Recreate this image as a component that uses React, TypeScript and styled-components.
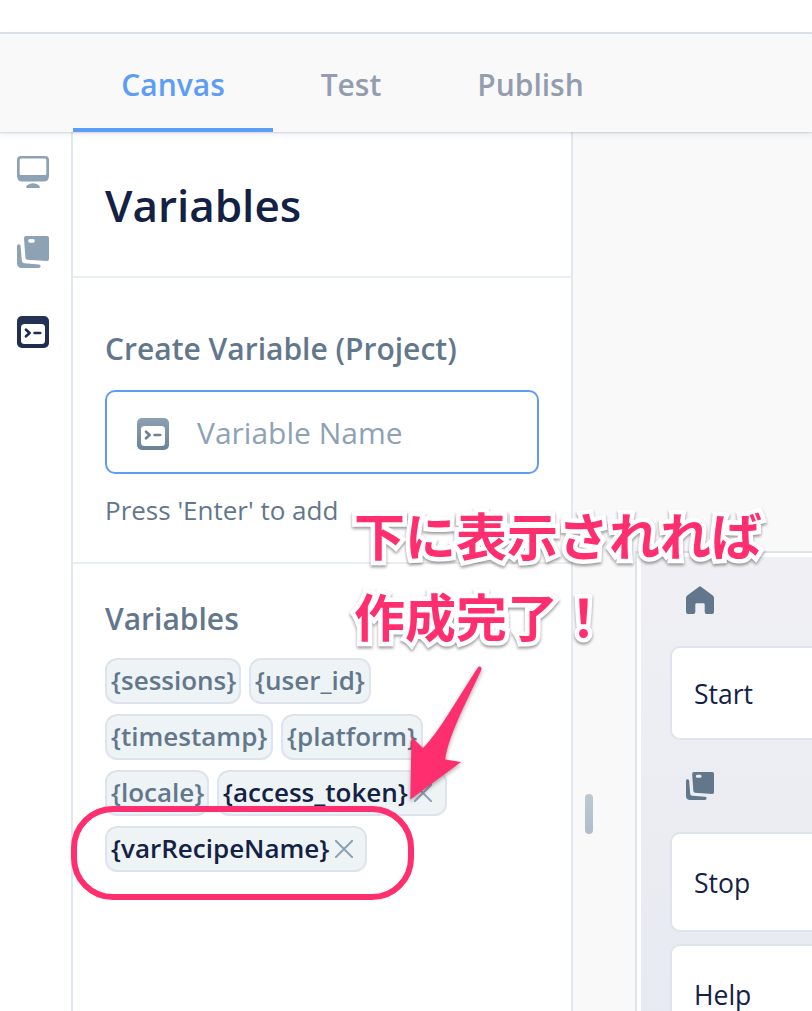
import React from "react";
import styled, { createGlobalStyle } from "styled-components";

const GlobalStyle = createGlobalStyle`
  * { box-sizing: border-box; }
  html, body { margin: 0; background: #fff; overflow: hidden; }
  body { font-family: "Open Sans", sans-serif; color: #132144; }
`;

const Page = styled.div`
  position: relative;
  width: 812px;
  height: 1011px;
  overflow: hidden;
  display: flex;
  flex-direction: column;
`;

const TopBar = styled.div`
  flex: none;
  height: 34px;
  background: #fff;
  border-bottom: 2px solid #dfe3ed;
`;

const Tabs = styled.nav`
  position: relative;
  z-index: 1;
  flex: none;
  height: 98px;
  padding-left: 73px;
  display: flex;
  background: #f9f9f9;
  box-shadow: 0 1px 1px rgba(17, 49, 96, 0.1), 0 2px 6px rgba(17, 49, 96, 0.1);
`;

const Tab = styled.div<{ $active?: boolean; $width: number }>`
  width: ${(p) => p.$width}px;
  padding-top: 8px;
  border-bottom: 4px solid ${(p) => (p.$active ? "#5d9df5" : "transparent")};
  display: flex;
  align-items: center;
  justify-content: center;
  font-size: 30px;
  line-height: 40px;
  font-weight: 600;
  color: ${(p) => (p.$active ? "#5d9df5" : "#949db0")};
`;

const Body = styled.div`
  flex: 1;
  min-height: 0;
  display: flex;
`;

const Rail = styled.div`
  flex: none;
  width: 73px;
  padding: 24px 0 0 17px;
  border-right: 2px solid #e2e8ee;
  display: flex;
  flex-direction: column;
  gap: 48px;
  svg { display: block; }
`;

const Panel = styled.section`
  flex: none;
  width: 500px;
  border-right: 2px solid #e2e8ee;
`;

const PanelHeader = styled.header`
  height: 146px;
  padding: 43px 32px 0;
  border-bottom: 2px solid #eaeff4;
  font-size: 44px;
  line-height: 60px;
  font-weight: 600;
`;

const CreateSection = styled.div`
  height: 286px;
  padding: 50px 32px 0;
  border-bottom: 2px solid #eaeff4;
`;

const Label = styled.div`
  font-size: 30px;
  line-height: 42px;
  font-weight: 600;
  color: #62778c;
  white-space: nowrap;
`;

const Field = styled.div`
  margin: 20px 0 14px;
  height: 84px;
  padding: 4px 30px 0;
  border: 2px solid #5d9df5;
  border-radius: 10px;
  display: flex;
  align-items: center;
  gap: 28px;
  font-size: 30px;
  line-height: 40px;
  color: #8da2b5;
`;

const Placeholder = styled.span`
  padding-bottom: 2px;
`;

const Hint = styled.div`
  font-size: 26px;
  line-height: 44px;
  color: #62778c;
`;

const ListSection = styled.div`
  padding: 34px 32px 0;
`;

const Chips = styled.div`
  margin-top: 18px;
  padding-right: 32px;
  display: flex;
  flex-wrap: wrap;
  gap: 10px 8px;
`;

const Chip = styled.div<{ $own?: boolean; $width: number }>`
  width: ${(p) => p.$width}px;
  height: 46px;
  padding-left: 4px;
  border: 2px solid #dfe3ed;
  border-radius: 12px;
  background: #eef3f5;
  display: flex;
  align-items: center;
  gap: 6px;
  font-size: 26px;
  line-height: 36px;
  font-weight: 600;
  white-space: nowrap;
  color: ${(p) => (p.$own ? "#132144" : "#62778c")};
  svg { flex: none; }
`;

const ChipName = styled.span`
  padding-bottom: 2px;
`;

const Canvas = styled.main`
  flex: 1;
  min-width: 0;
  display: flex;
  background: #f9f9f9;
`;

const Gutter = styled.div`
  flex: none;
  width: 62px;
  padding: 662px 0 0 12px;
`;

const Grip = styled.div`
  width: 8px;
  height: 40px;
  border-radius: 4px;
  background: linear-gradient(#bdc9d2, #b0bdc8);
`;

const Block = styled.div`
  flex: 1;
  min-width: 0;
  margin-top: 419px;
  padding: 29px 0 0 29px;
  border: solid #dfe3ea;
  border-width: 2px 0 0 2px;
  box-shadow: inset 4px 4px 0 #fff;
  background: linear-gradient(#f0f0f4, #e7eaf1);
  overflow: hidden;
`;

const BlockIcon = styled.div<{ $top: number }>`
  margin: ${(p) => p.$top}px 0 0 20px;
  height: 28px;
  svg { display: block; }
`;

const Card = styled.div<{ $top: number; $height: number }>`
  margin: ${(p) => p.$top}px -20px 0 4px;
  height: ${(p) => p.$height}px;
  padding: 1px 0 0 22px;
  border: 2px solid #dfe3ed;
  border-radius: 10px;
  background: #fff;
  display: flex;
  align-items: center;
  font-size: 26.5px;
  line-height: 36px;
`;

const Note = styled.div`
  position: absolute;
  z-index: 3;
  left: 354px;
  top: 494px;
  font-family: "Noto Sans CJK JP", sans-serif;
  font-weight: 700;
  font-size: 51px;
  line-height: 81px;
  white-space: nowrap;
  color: #ff2e6e;
  -webkit-text-stroke: 9px #fff;
  paint-order: stroke fill;
  stroke-linejoin: round;
  filter: drop-shadow(0 2px 1.5px rgba(0, 0, 0, 0.4));
`;

const NoteLine = styled.div`
  height: 81px;
`;

const Marker = styled.div`
  position: absolute;
  z-index: 2;
  left: 71px;
  top: 806px;
  width: 343px;
  height: 94px;
  border: 6px solid #ff2e6e;
  border-radius: 42px;
`;

const Arrow = styled.svg`
  position: absolute;
  z-index: 3;
  left: 400px;
  top: 660px;
  filter: drop-shadow(0 2px 2px rgba(0, 0, 0, 0.35));
`;

const ScreenIcon = () => (
  <svg width="32" height="32" viewBox="0 0 32 32">
    <path fill="#8da2b5" fillRule="evenodd" d="M4 0H28Q32 0 32 4V20Q32 25.5 26.5 25.5H5.500Q0 25.500 0 20V4Q0 0 4 0ZM4 2.500Q2.700 2.500 2.700 4V17.700Q2.700 19 4 19H28Q29.300 19 29.300 17.700V4Q29.300 2.500 28 2.500Z" />
    <path fill="#8da2b5" d="M9 31Q9.500 29 12.500 28Q16 26.700 19.500 28Q22.500 29 23 31Q23 32 22 32H10Q9 32 9 31Z" />
  </svg>
);

const FlowsIcon = ({ size, color }: { size: number; color: string }) => (
  <svg width={size} height={size} viewBox="0 0 32 32">
    <path fill={color} fillRule="evenodd" d="M9 0H30Q32 0 32 2V23Q32 25 30 25L10.500 23.700Q8.600 23.600 8.400 21.800L7 2.200Q7 0 9 0ZM13 3.100Q11.200 3.100 11.200 4.900Q11.200 6.700 13 6.700H16Q17.800 6.700 17.800 4.900Q17.800 3.100 16 3.100Z" />
    <path fill={color} d="M0 10Q0 8.300 1.700 8.300Q3.400 8.300 3.600 10L4.800 24.800Q5 27 7.200 27.200L22 28.400Q23.700 28.700 23.600 30.300Q23.500 32 21.700 32H5Q0 32 0 27Z" />
  </svg>
);

const CodeIcon = ({ from, to, id }: { from: string; to: string; id: string }) => (
  <svg width="32" height="32" viewBox="0 0 32 32">
    <defs>
      <linearGradient id={id} x1="0" y1="0" x2="0" y2="1">
        <stop offset="0" stopColor={from} />
        <stop offset="1" stopColor={to} />
      </linearGradient>
    </defs>
    <rect width="32" height="32" rx="5" fill={`url(#${id})`} />
    <rect x="4" y="8" width="24" height="20" rx="3.500" fill="#fff" />
    <path d="M9 13.700L12.600 17L9 20.300M17.600 17H23.200" fill="none" stroke={to} strokeWidth="2.700" strokeLinecap="round" strokeLinejoin="round" />
  </svg>
);

const HomeIcon = () => (
  <svg width="28" height="28" viewBox="0 0 28 28">
    <path fill="#62778c" d="M12.700 .9Q14-.2 15.300 .9L26.800 9.600Q28 10.500 28 12V26Q28 28 26 28H20.700Q18.700 28 18.700 26V18.500Q18.700 17.300 17.500 17.300H10.500Q9.300 17.300 9.300 18.500V26Q9.300 28 7.300 28H2Q0 28 0 26V12Q0 10.500 1.200 9.600Z" />
  </svg>
);

const CloseIcon = () => (
  <svg width="18" height="18" viewBox="0 0 18 18">
    <path d="M.8 .8L17.200 17.200M17.200 .8L.8 17.200" fill="none" stroke="#8da2b5" strokeWidth="2" strokeLinecap="round" />
  </svg>
);

const variables = [
  { name: "{sessions}", width: 136 },
  { name: "{user_id}", width: 122 },
  { name: "{timestamp}", width: 168 },
  { name: "{platform}", width: 142 },
  { name: "{locale}", width: 104 },
  { name: "{access_token}", width: 230, own: true },
  { name: "{varRecipeName}", width: 262, own: true },
];

export default function App() {
  return (
    <Page>
      <GlobalStyle />
      <TopBar />
      <Tabs>
        <Tab $active $width={200}>Canvas</Tab>
        <Tab $width={156}>Test</Tab>
        <Tab $width={203}>Publish</Tab>
      </Tabs>
      <Body>
        <Rail>
          <ScreenIcon />
          <FlowsIcon size={32} color="#8da2b5" />
          <CodeIcon id="rail-code" from="#263353" to="#1f2b4f" />
        </Rail>
        <Panel>
          <PanelHeader>Variables</PanelHeader>
          <CreateSection>
            <Label>Create Variable (Project)</Label>
            <Field>
              <CodeIcon id="field-code" from="#8ca0b3" to="#6c8298" />
              <Placeholder>Variable Name</Placeholder>
            </Field>
            <Hint>Press 'Enter' to add</Hint>
          </CreateSection>
          <ListSection>
            <Label>Variables</Label>
            <Chips>
              {variables.map((v) => (
                <Chip key={v.name} $own={v.own} $width={v.width}>
                  <ChipName>{v.name}</ChipName>
                  {v.own && <CloseIcon />}
                </Chip>
              ))}
            </Chips>
          </ListSection>
        </Panel>
        <Canvas>
          <Gutter>
            <Grip />
          </Gutter>
          <Block>
            <BlockIcon $top={4}><HomeIcon /></BlockIcon>
            <Card $top={32} $height={94}>Start</Card>
            <BlockIcon $top={32}><FlowsIcon size={28} color="#62778c" /></BlockIcon>
            <Card $top={32} $height={100}>Stop</Card>
            <Card $top={12} $height={100}>Help</Card>
          </Block>
        </Canvas>
      </Body>
      <Marker />
      <Arrow width="90" height="150" viewBox="0 0 90 150">
        <path fill="#ff2e6e" d="M77.500 8Q79.500 5.500 81 7.200Q82 8.500 81 10.500C70 35 49 73 45.200 99.500L61 102L10.300 139.500L11.500 77L23 88C37 75 58 38 77.500 8Z" />
      </Arrow>
      <Note>
        <NoteLine>下に表示されれば</NoteLine>
        <NoteLine>作成完了！</NoteLine>
      </Note>
    </Page>
  );
}
